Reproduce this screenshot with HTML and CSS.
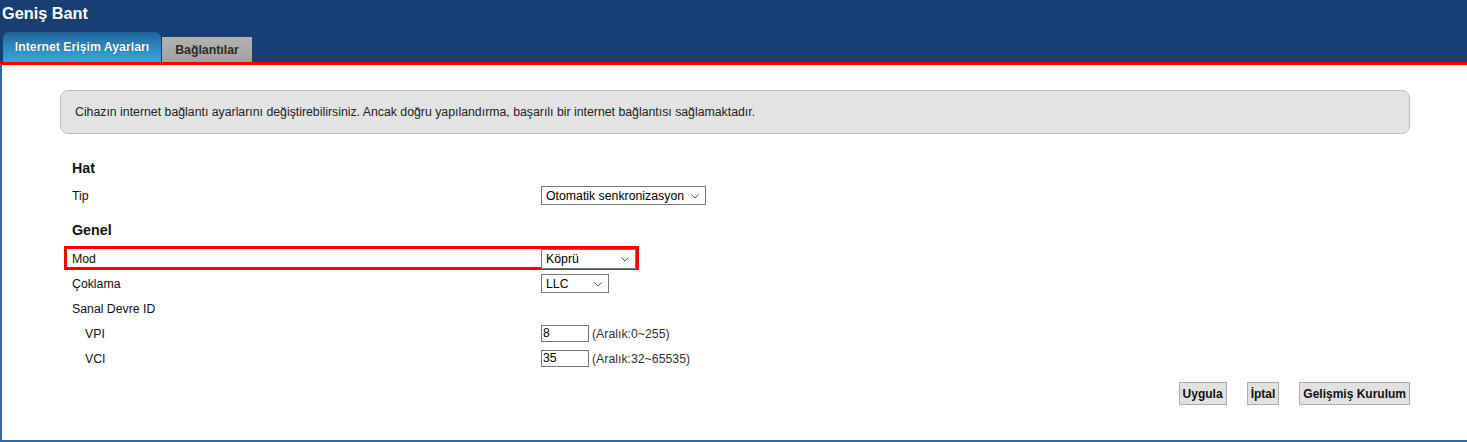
FILE: index.html
```html
<!DOCTYPE html>
<html lang="tr">
<head>
<meta charset="utf-8">
<title>Geniş Bant</title>
<link rel="stylesheet" href="styles.css">
</head>
<body>
<header class="topbar">
  <h1 class="title">Geniş Bant</h1>
  <nav class="tabs">
    <a class="tab tab-active">Internet Erişim Ayarları</a>
    <a class="tab tab-idle">Bağlantılar</a>
  </nav>
</header>
<div class="redline"></div>
<main class="content">
  <div class="notice">Cihazın internet bağlantı ayarlarını değiştirebilirsiniz. Ancak doğru yapılandırma, başarılı bir internet bağlantısı sağlamaktadır.</div>

  <section class="form">
    <h3 class="group">Hat</h3>
    <div class="row">
      <span class="label">Tip</span>
      <span class="select sel-tip">Otomatik senkronizasyon
        <svg class="chev" width="8" height="5" viewBox="0 0 8 5"><path d="M0.5 0.5 L4 4 L7.5 0.5" fill="none" stroke="#555" stroke-width="1"/></svg>
      </span>
    </div>

    <h3 class="group group-gap">Genel</h3>
    <div class="row row-mark">
      <span class="label">Mod</span>
      <span class="select sel-mod">Köprü
        <svg class="chev" width="8" height="5" viewBox="0 0 8 5"><path d="M0.5 0.5 L4 4 L7.5 0.5" fill="none" stroke="#555" stroke-width="1"/></svg>
      </span>
    </div>
    <div class="row">
      <span class="label">Çoklama</span>
      <span class="select sel-llc">LLC
        <svg class="chev" width="8" height="5" viewBox="0 0 8 5"><path d="M0.5 0.5 L4 4 L7.5 0.5" fill="none" stroke="#555" stroke-width="1"/></svg>
      </span>
    </div>
    <div class="row">
      <span class="label">Sanal Devre ID</span>
    </div>
    <div class="row">
      <span class="label sub">VPI</span>
      <span class="field"><span class="input">8</span><span class="hint">(Aralık:0~255)</span></span>
    </div>
    <div class="row">
      <span class="label sub">VCI</span>
      <span class="field"><span class="input">35</span><span class="hint">(Aralık:32~65535)</span></span>
    </div>
  </section>

  <div class="actions">
    <button class="btn">Uygula</button>
    <button class="btn">İptal</button>
    <button class="btn">Gelişmiş Kurulum</button>
  </div>
</main>
</body>
</html>
```

FILE: styles.css
```css
html, body {
  margin: 0;
  padding: 0;
  background: #fff;
  font-family: "Liberation Sans", Arial, sans-serif;
  font-size: 12.3px;
  color: #111;
}

/* top bar with page title and tabs */
.topbar {
  background: #173f73;
  height: 62px;
  display: flex;
  flex-direction: column;
  justify-content: space-between;
}

.title {
  margin: 0;
  padding: 3px 0 0 2px;
  font-size: 16.3px;
  font-weight: bold;
  color: #fff;
  line-height: 20px;
}

.tabs {
  display: flex;
  align-items: flex-end;
  padding-left: 3px;
}

.tab {
  display: flex;
  align-items: center;
  justify-content: center;
  font-weight: bold;
  font-size: 12.3px;
}

.tab-active {
  width: 158px;
  height: 30px;
  border-radius: 6px 6px 0 0;
  color: #fff;
  background: linear-gradient(#1f5f96 0%, #2a7fb6 35%, #2f96c9 70%, #36a8d9 100%);
  text-shadow: 0 0 1px #0b3c66;
}

.tab-idle {
  width: 90px;
  height: 25px;
  margin-left: 1px;
  color: #2b2b2b;
  background: linear-gradient(#b2b2b2, #a2a2a2);
}

.redline {
  height: 3px;
  background: #ff0000;
}

/* main panel */
.content {
  border-left: 2px solid #2b69b0;
  border-bottom: 2px solid #2b69b0;
  height: 350px;
  padding: 25px 57px 0 0;
}

.notice {
  margin-left: 58px;
  height: 44px;
  box-sizing: border-box;
  border: 1px solid #bdbdbd;
  border-radius: 8px;
  background: #e3e3e3;
  padding-left: 14px;
  display: flex;
  align-items: center;
  color: #222;
}

.form {
  padding: 22px 0 0 70px;
}

.group {
  margin: 0;
  height: 27px;
  line-height: 25px;
  font-size: 14.3px;
  font-weight: bold;
  color: #111;
}

.group-gap {
  margin-top: 10px;
}

.row {
  display: grid;
  grid-template-columns: 469px auto;
  align-items: center;
  height: 25px;
}

.row-mark {
  margin: 1px 0 1px -8px;
  height: 24px;
  width: 575px;
  box-sizing: border-box;
  border: 3px solid #ff0000;
  padding-left: 5px;
}

.label {
  color: #111;
}

.label.sub {
  padding-left: 13px;
}

/* drop-down look */
.select {
  position: relative;
  display: flex;
  align-items: center;
  box-sizing: border-box;
  height: 19px;
  border: 1px solid #7a7a7a;
  background: #fff;
  padding-left: 4px;
  color: #000;
}

.chev {
  position: absolute;
  right: 6px;
  top: 7px;
}

.sel-tip { width: 165px; }
.sel-mod { width: 95px; height: 20px; }
.sel-llc { width: 68px; }

.field {
  display: flex;
  align-items: center;
  gap: 3px;
}

.input {
  display: inline-block;
  width: 48px;
  height: 17px;
  line-height: 15px;
  box-sizing: border-box;
  border: 1px solid #767676;
  padding-left: 1px;
  color: #000;
}

.hint {
  color: #333;
}

.actions {
  display: flex;
  justify-content: flex-end;
  gap: 20px;
  margin-top: 11px;
}

.btn {
  font-family: "Liberation Sans", Arial, sans-serif;
  font-size: 12px;
  font-weight: bold;
  color: #111;
  height: 23px;
  padding: 0 3px;
  background: #e1e1e1;
  border: 1px solid #adadad;
  border-radius: 0;
}
```
